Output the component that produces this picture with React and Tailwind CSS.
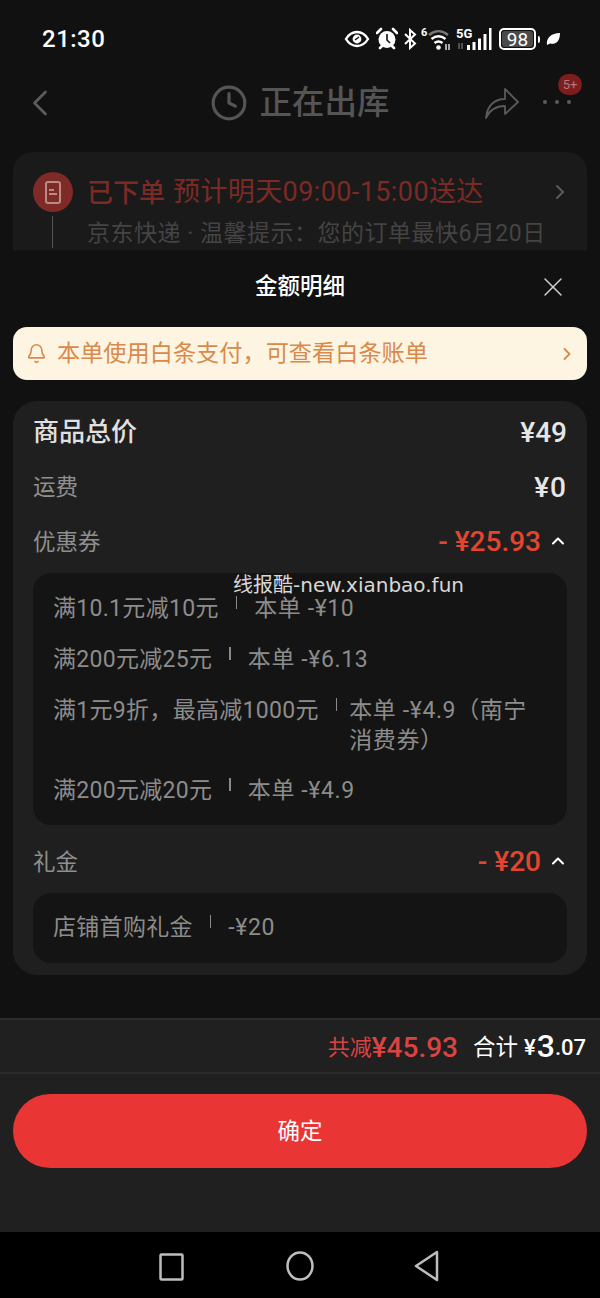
import { Bell, ChevronLeft, ChevronRight, ChevronUp, Clock, X } from "lucide-react";

const font = "font-['Roboto','Noto_Sans_CJK_SC',sans-serif]";

function StatusIcons() {
	return (
		<div className="flex items-center h-[26px] text-white">
			{/* eye */}
			<svg width="26" height="20" viewBox="0 0 26 20" className="mr-[6px]">
				<path d="M2 10C5 5 9 3 13 3s8 2 11 7c-3 5-7 7-11 7s-8-2-11-7z" fill="none" stroke="#fff" strokeWidth="2.4" />
				<circle cx="13" cy="10" r="4.4" fill="#fff" />
				<path d="M11 11l4-3" stroke="#111" strokeWidth="1.4" />
			</svg>
			{/* alarm */}
			<svg width="22" height="24" viewBox="0 0 22 24" className="mr-[5px]">
				<circle cx="11" cy="12.5" r="8.5" fill="#fff" />
				<path d="M1 6l4-4M21 6l-4-4M4 21l2-2M18 21l-2-2" stroke="#fff" strokeWidth="2.6" strokeLinecap="round" />
				<path d="M11 7v6l3 3" fill="none" stroke="#111" strokeWidth="1.6" />
			</svg>
			{/* bluetooth */}
			<svg width="15" height="22" viewBox="0 0 15 22" className="mr-[3px]">
				<path d="M2 6l10 9.5L7 20V2l5 4.5L2 16" fill="none" stroke="#fff" strokeWidth="2" />
			</svg>
			{/* wifi */}
			<svg width="32" height="26" viewBox="0 0 32 26">
				<text x="0" y="10" fill="#fff" fontSize="11" fontWeight="700" fontFamily="Roboto">6</text>
				<path d="M8 9c6-5 13-5 19 0" fill="none" stroke="#777" strokeWidth="2.4" />
				<path d="M10.5 13c4.500-3.500 9.500-3.500 14 0" fill="none" stroke="#fff" strokeWidth="2.4" />
				<path d="M13.500 17c2.500-2 5.500-2 8 0" fill="none" stroke="#fff" strokeWidth="2.400" />
				<circle cx="17.500" cy="21.500" r="2.300" fill="#fff" />
				<path d="M25 18v6M28 18v6" stroke="#ddd" strokeWidth="1.500" />
			</svg>
			{/* 5G signal */}
			<svg width="36" height="24" viewBox="0 0 36 24" className="ml-[3px] mr-[7px]">
				<text x="0" y="11" fill="#fff" fontSize="13" fontWeight="700" fontFamily="Roboto">5G</text>
				<path d="M3 16v6M6 16v6" stroke="#666" strokeWidth="1.500" />
				<path d="M11 18h3v5h-3zM16.500 15h3v8h-3zM22 11.500h3V23h-3zM27.500 7h3v16h-3zM33 1h2.500v22H33z" fill="#fff" />
			</svg>
			{/* battery */}
			<div className="flex items-center mr-[6px]">
				<div className="w-[37px] h-[22px] rounded-[5px] border-2 border-white flex items-center justify-center p-[1px]">
					<div className={`${font} w-full h-full rounded-[3px] bg-[#4a4a4a] flex items-center justify-center text-[19px] leading-none text-white`}>98</div>
				</div>
				<div className="w-[2px] h-[7px] ml-[2px] bg-white rounded-r" />
			</div>
			{/* leaf */}
			<svg width="14" height="14" viewBox="0 0 14 14">
				<path d="M1 13C0 6 5 1 14 1c0 8-4 12-10 10.500L1 13z" fill="#fff" />
			</svg>
		</div>
	);
}

function CouponRow({ name, detail, className = "", gapClass = "mr-[17px]" }) {
	return (
		<div className={`flex items-start text-[23px] leading-[30px] tracking-[0.3px] text-[#8c8c8c] ${className}`}>
			<span className="shrink-0">{name}</span>
			<span className={`w-[1.5px] h-[13px] bg-[#8a8a8a] shrink-0 mt-[2px] ml-[17px] ${gapClass}`} />
			<span className="tracking-[0.6px]">{detail}</span>
		</div>
	);
}

function AmountRow({ label, amount, className = "" }) {
	return (
		<div className={`flex items-center justify-between ${className}`}>
			<span className="text-[22.500px] text-[#8f8f8f] leading-[30px]">{label}</span>
			<div className="flex items-center">
				<span className="text-[#e5452f] text-[28px] font-medium leading-[30px]">- ¥{amount}</span>
				<ChevronUp size={20} strokeWidth={2.5} className="text-white ml-[7px] mr-[-1px] -mt-[3px]" />
			</div>
		</div>
	);
}

export default function App() {
	return (
		<div className={`${font} relative w-[600px] h-[1298px] overflow-hidden bg-[#111112] flex flex-col`}>
			{/* page behind the sheet */}
			<div className="flex items-center justify-between h-[76px] pl-[42px] pr-[40px] pt-[2px]">
				<span className="text-white text-[24px] font-medium tracking-[0.5px]">21:30</span>
				<StatusIcons />
			</div>
			<div className="relative flex items-center justify-center h-[54px]">
				<ChevronLeft size={44} strokeWidth={1.5} className="absolute left-[18px] text-[#5c5c5c]" />
				<Clock size={38} strokeWidth={2} className="text-[#555] mr-[11px]" />
				<span className="text-[32.500px] font-medium text-[#555] leading-none">正在出库</span>
				<svg width="36" height="34" viewBox="0 0 36 34" className="absolute left-[484px] top-[10px]" fill="none" stroke="#5a5a5a" strokeWidth="1.8">
					<path d="M2 32C3 20 10 13 21 13V3l13 13-13 12V20C12 20 6 23 2 32z" strokeLinejoin="round" />
				</svg>
				<div className="absolute left-[543px] top-[24px] flex gap-[8px]">
					<span className="w-[4px] h-[4px] rounded-full bg-[#5a5a5a]" />
					<span className="w-[4px] h-[4px] rounded-full bg-[#5a5a5a]" />
					<span className="w-[4px] h-[4px] rounded-full bg-[#5a5a5a]" />
				</div>
				<span className="absolute left-[558px] top-[-2px] w-[24px] h-[21px] rounded-full bg-[#7d1d1d] text-[#b07a7a] text-[13px] flex items-center justify-center">5+</span>
			</div>
			<div className="mx-[13px] mt-[22px] h-[130px] rounded-[20px] bg-[#1a1a1a] pl-[20px] pr-[20px] pt-[20px]">
				<div className="flex items-center">
					<div className="w-[40px] h-[40px] rounded-full bg-[#7f2a27] flex items-center justify-center shrink-0">
						<div className="w-[16px] h-[23px] rounded-[3px] border-2 border-[#b98a86] flex flex-col justify-center gap-[2px] pl-[2px]">
							<span className="w-[5px] h-[2px] bg-[#b98a86]" />
							<span className="w-[8px] h-[2px] bg-[#b98a86]" />
						</div>
					</div>
					<span className="ml-[14px] pt-[1px] text-[26px] font-medium leading-none text-[#7b2a25]">已下单</span>
					<span className="ml-[8px] pt-[1px] text-[27px] tracking-[0.4px] leading-none text-[#7b2a25]">预计明天09:00-15:00送达</span>
					<ChevronRight size={24} strokeWidth={2} className="ml-auto -mr-[5px] text-[#5a5a5a]" />
				</div>
				<div className="flex mt-[4px]">
					<span className="w-px h-[32px] bg-[#555] ml-[19px] mr-[34px]" />
					<span className="pt-[3px] text-[23px] tracking-[0.5px] leading-[30px] whitespace-nowrap text-[#444]">京东快递 · 温馨提示：您的订单最快6月20日</span>
				</div>
			</div>

			{/* bottom sheet */}
			<div className="absolute left-0 right-0 top-[250px] h-[982px] rounded-t-[20px] bg-[#111112] flex flex-col">
				<div className="relative h-[73px] flex items-center justify-center">
					<span className="text-white text-[22.500px] font-medium">金额明细</span>
					<X size={32} strokeWidth={1.1} className="absolute right-[31px] top-[21px] text-[#d0d0d0]" />
				</div>
				<div className="mx-[13px] mt-[4px] h-[53px] rounded-[14px] bg-[#fdf5e2] flex items-center pl-[13px] pr-[10px] text-[#d98a4b]">
					<Bell size={21} strokeWidth={1.8} className="mr-[10px]" />
					<span className="text-[23.200px]">本单使用白条支付，可查看白条账单</span>
					<ChevronRight size={20} strokeWidth={2.2} className="ml-auto" />
				</div>

				<div className="mx-[13px] mt-[21px] h-[574px] rounded-[24px] bg-[#1f1f1f] px-[20px] pt-[15px]">
					<div className="flex items-center justify-between h-[33px]">
						<span className="text-[26px] font-medium text-[#e0e0e0]">商品总价</span>
						<span className="text-[28px] font-medium text-[#e6e6e6]">¥49</span>
					</div>
					<div className="flex items-center justify-between h-[30px] mt-[24px]">
						<span className="text-[22.500px] text-[#8f8f8f]">运费</span>
						<span className="text-[28px] tracking-[1px] font-medium text-[#e6e6e6]">¥0</span>
					</div>
					<AmountRow label="优惠券" amount="25.93" className="mt-[24px]" />
					<div className="mt-[16px] h-[252px] rounded-[18px] bg-[#141414] px-[20px] pt-[21px]">
						<CouponRow name="满10.1元减10元" detail="本单 -¥10" />
						<CouponRow name="满200元减25元" detail="本单 -¥6.13" className="mt-[21px]" />
						<CouponRow
							name="满1元9折，最高减1000元"
							detail={<>本单 -¥4.9（南宁<br />消费券）</>}
							className="mt-[21px]"
							gapClass="mr-[12px]"
						/>
						<CouponRow name="满200元减20元" detail="本单 -¥4.9" className="mt-[20px]" />
					</div>
					<AmountRow label="礼金" amount="20" className="mt-[22px]" />
					<div className="mt-[16px] h-[70px] rounded-[18px] bg-[#141414] px-[20px] pt-[20px]">
						<CouponRow name="店铺首购礼金" detail="-¥20" />
					</div>
				</div>

				<div className="mt-[43px] flex-1 bg-[#202020] border-t-2 border-[#2b2b2b] flex flex-col">
					<div className="h-[54px] border-b-2 border-[#2b2b2b] flex items-center justify-end pr-[14px] pt-[3px]">
						<span className="text-[22px] text-[#db4343]">共减</span>
						<span className="text-[28px] font-medium text-[#db4343]">¥45.93</span>
						<span className="text-[22.500px] text-white ml-[15px]">合计</span>
						<span className="text-[22px] font-medium text-white ml-[6px]">¥</span>
						<span className="text-[32px] font-medium text-white leading-none -mt-[3px] ml-[1px]">3</span>
						<span className="text-[22px] font-medium text-white">.07</span>
					</div>
					<button className="mx-[13px] mt-[20px] h-[74px] pt-[2px] rounded-full bg-[#e93534] text-white text-[22.500px]">确定</button>
				</div>
			</div>

			{/* navigation bar */}
			<div className="absolute left-0 right-0 bottom-0 h-[66px] bg-black">
				<svg width="600" height="66" viewBox="0 0 600 66" fill="none" stroke="#bdbdbd" strokeWidth="2.500" strokeLinejoin="round">
					<rect x="160.500" y="22.500" width="22" height="25" rx="1" />
					<ellipse cx="300" cy="34" rx="12.500" ry="13.500" />
					<path d="M437 20L416 34l21 14z" />
				</svg>
			</div>

			{/* watermark */}
			<span className="absolute left-[233px] top-[573px] text-[20px] leading-[24px] text-[#d8d8d8] font-['DejaVu_Sans','Noto_Sans_CJK_SC',sans-serif]">线报酷-new.xianbao.fun</span>
		</div>
	);
}
